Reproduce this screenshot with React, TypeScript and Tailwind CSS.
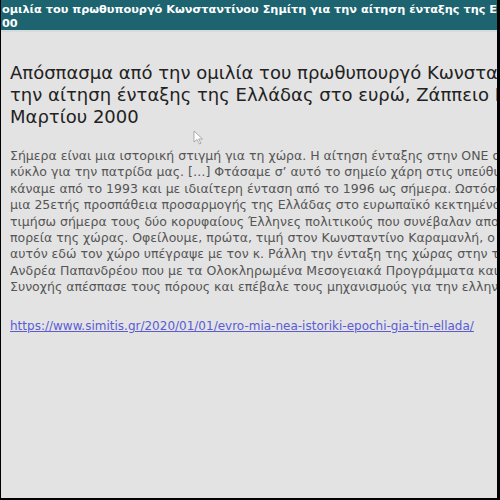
const bodyLines = [
  'Σήμερα είναι μια ιστορική στιγμή για τη χώρα. Η αίτηση ένταξης στην ONE σηματοδοτεί ένα νέο',
  'κύκλο για την πατρίδα μας. […] Φτάσαμε σ’ αυτό το σημείο χάρη στις υπεύθυνες προσπάθειες που',
  'κάναμε από το 1993 και με ιδιαίτερη ένταση από το 1996 ως σήμερα. Ωστόσο η ένταξη είναι',
  'μια 25ετής προσπάθεια προσαρμογής της Ελλάδας στο ευρωπαϊκό κεκτημένο. Θέλω γι’ αυτό να',
  'τιμήσω σήμερα τους δύο κορυφαίους Έλληνες πολιτικούς που συνέβαλαν αποφασιστικά στην',
  'πορεία της χώρας. Οφείλουμε, πρώτα, τιμή στον Κωνσταντίνο Καραμανλή, ο οποίος σε',
  'αυτόν εδώ τον χώρο υπέγραψε με τον κ. Ράλλη την ένταξη της χώρας στην τότε ΕΟΚ και στον',
  'Ανδρέα Παπανδρέου που με τα Ολοκληρωμένα Μεσογειακά Προγράμματα και το Πακέτο',
  'Συνοχής απέσπασε τους πόρους και επέβαλε τους μηχανισμούς για την ελληνική ανάπτυξη.',
];

const titleLines = [
  'Απόσπασμα από την ομιλία του πρωθυπουργό Κωνσταντίνου Σημίτη για',
  'την αίτηση ένταξης της Ελλάδας στο ευρώ, Ζάππειο Μεγάρου, 22',
  'Μαρτίου 2000',
];

const App = () => {
  return (
    <div className="w-[500px] h-[500px] bg-black pl-px pr-[3px] pb-[2px] overflow-hidden">
      <div
        className="relative h-full bg-[#e3e3e3] flex flex-col overflow-hidden"
        style={{ fontFamily: '"DejaVu Sans", Verdana, sans-serif' }}
      >
        {/* Header bar */}
        <div className="h-[32px] bg-[#1d6470] text-white font-bold text-[11.3px] leading-[14px] pt-[3px] pl-px overflow-hidden border-b-2 border-[#d6dcdc]">
          <div className="whitespace-nowrap">
            ομιλία του πρωθυπουργό Κωνσταντίνου Σημίτη για την αίτηση ένταξης της Ελλάδας στο ευρώ
          </div>
          <div className="whitespace-nowrap">00</div>
        </div>

        <div className="pl-[9px] pt-[30px]">
          <div className="text-[18px] leading-[22px] text-[#222]">
            {titleLines.map((l) => (
              <div key={l} className="whitespace-nowrap">{l}</div>
            ))}
          </div>

          <div className="mt-[20px] text-[12.5px] leading-[16.4px] text-[#555]">
            {bodyLines.map((l) => (
              <div key={l} className="whitespace-nowrap">{l}</div>
            ))}
          </div>

          <div className="mt-[22px] text-[12px] leading-[16px]">
            <a
              href="#"
              className="text-[#5b5bd6] underline whitespace-nowrap"
            >
              https://www.simitis.gr/2020/01/01/evro-mia-nea-istoriki-epochi-gia-tin-ellada/
            </a>
          </div>
        </div>

        {/* mouse cursor */}
        <svg
          className="absolute left-[192px] top-[130px]"
          width="12"
          height="16"
          viewBox="0 0 12 16"
        >
          <path d="M1 1 L1 12 L4 9.5 L6.5 14 L8 13.3 L5.7 9 L9.5 9 Z" fill="#fff" stroke="#999" strokeWidth="0.8" />
        </svg>
      </div>
    </div>
  );
};

export default App;
